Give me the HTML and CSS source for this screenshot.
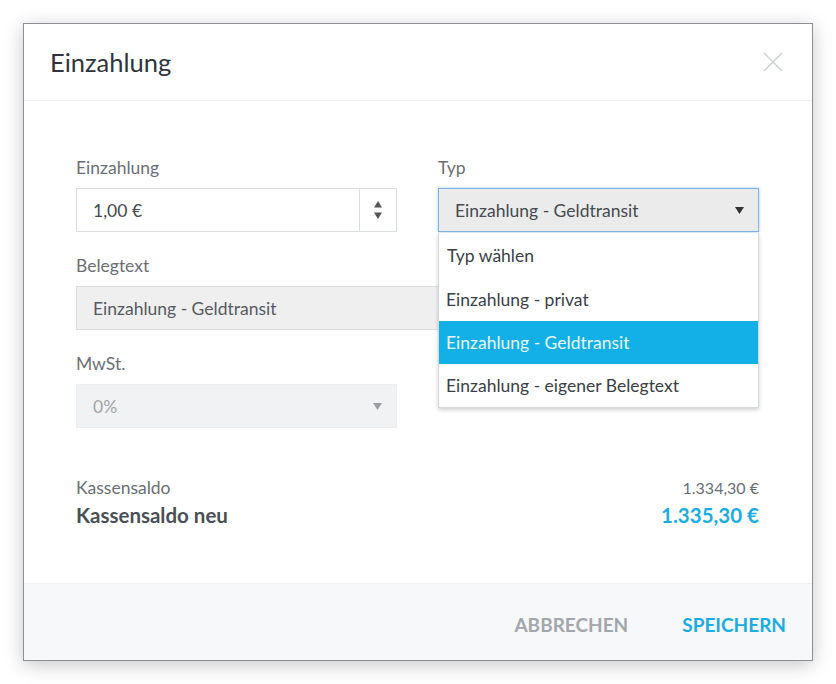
FILE: index.html
```html
<!DOCTYPE html>
<html lang="de">
<head>
<meta charset="utf-8">
<link rel="stylesheet" href="styles.css">
</head>
<body>
<div class="dialog">
  <div class="header">
    <h1 class="title">Einzahlung</h1>
    <svg class="close" width="22" height="22" viewBox="0 0 22 22"><path d="M2 2 L20 20 M20 2 L2 20" stroke="#cfd2d5" stroke-width="1.6" fill="none"/></svg>
  </div>
  <div class="body">
    <div class="form">
      <div class="field">
        <label class="label">Einzahlung</label>
        <div class="input number">
          <span class="value">1,00 €</span>
          <span class="spin">
            <svg width="10" height="24" viewBox="0 0 10 24"><path d="M5 3 L9 9.5 L1 9.5 Z" fill="#555"/><path d="M1 14.5 L9 14.5 L5 21 Z" fill="#555"/></svg>
          </span>
        </div>
      </div>
      <div class="field typ">
        <label class="label">Typ</label>
        <div class="input select focus">
          <span class="value">Einzahlung - Geldtransit</span>
          <svg class="caret" width="9" height="7" viewBox="0 0 9 7"><path d="M0 0 L9 0 L4.5 7 Z" fill="#333"/></svg>
        </div>
        <ul class="menu">
          <li class="opt">Typ wählen</li>
          <li class="opt">Einzahlung - privat</li>
          <li class="opt active">Einzahlung - Geldtransit</li>
          <li class="opt">Einzahlung - eigener Belegtext</li>
        </ul>
      </div>
      <div class="field wide">
        <label class="label">Belegtext</label>
        <div class="input readonly">
          <span class="value">Einzahlung - Geldtransit</span>
        </div>
      </div>
      <div class="field">
        <label class="label">MwSt.</label>
        <div class="input disabled">
          <span class="value">0%</span>
          <svg class="caret" width="9" height="7" viewBox="0 0 9 7"><path d="M0 0 L9 0 L4.5 7 Z" fill="#9a9ea2"/></svg>
        </div>
      </div>
    </div>
    <div class="totals">
      <div class="row small"><span>Kassensaldo</span><span class="num">1.334,30 €</span></div>
      <div class="row big"><span>Kassensaldo neu</span><span class="blue">1.335,30 €</span></div>
    </div>
  </div>
  <div class="footer">
    <button class="btn cancel">ABBRECHEN</button>
    <button class="btn save">SPEICHERN</button>
  </div>
</div>
</body>
</html>
```
FILE: styles.css
```css
* { box-sizing: border-box; }
html, body { margin: 0; background: #fff; }
body {
  padding: 23px;
  font-family: Lato, "Noto Sans", sans-serif;
  color: #555a60;
}
.dialog {
  width: 790px;
  height: 638px;
  border: 1px solid #8c8f93;
  background: #fff;
  box-shadow: 0 4px 18px rgba(0,0,0,0.22);
  display: flex;
  flex-direction: column;
}
.header {
  height: 77px;
  border-bottom: 1px solid #f0f1f2;
  display: flex;
  align-items: center;
  justify-content: space-between;
  padding: 0 28px 0 26px;
}
.title {
  margin: 0;
  font-size: 25.5px;
  font-weight: 400;
  color: #30353b;
  padding-top: 0;
}
.body {
  flex: 1;
  padding: 56px 53px 0 52px;
}
.form {
  display: grid;
  grid-template-columns: 321px 321px;
  column-gap: 41px;
  row-gap: 23px;
}
.field { display: flex; flex-direction: column; gap: 9px; }
.field.wide { grid-column: 1 / 3; }
.field.typ { position: relative; }
.label { font-size: 17.5px; line-height: 22px; color: #6a6f75; }
.input {
  height: 44px;
  border: 1px solid #dcdfe2;
  display: flex;
  align-items: center;
  padding-left: 16px;
  font-size: 17.5px;
  color: #454a50;
}
.number .value { flex: 1; }
.spin {
  width: 37px;
  height: 100%;
  border-left: 1px solid #dcdfe2;
  display: flex;
  align-items: center;
  justify-content: center;
}
.select {
  background: #ebebeb;
  justify-content: space-between;
  padding-right: 14px;
}
.select.focus {
  border-color: #7fb3e6;
  box-shadow: 0 0 3px rgba(80,160,230,0.5);
}
.readonly { background: #efefef; color: #555a60; }
.disabled {
  background: #f1f2f3;
  border-color: #eceef0;
  color: #a0a4a8;
  justify-content: space-between;
  padding-right: 14px;
}
.menu {
  position: absolute;
  left: 0;
  right: 0;
  top: 76px;
  margin: 0;
  padding: 0;
  list-style: none;
  background: #fff;
  border: 1px solid #d5d8db;
  border-top: none;
  box-shadow: 0 2px 4px rgba(0,0,0,0.18);
  z-index: 5;
}
.opt {
  height: 43px;
  display: flex;
  align-items: center;
  padding-left: 7px;
  font-size: 17.5px;
  color: #3a3f45;
}
.opt:first-child { height: 45px; padding-left: 8px; }
.opt.active { background: #12b0e6; color: #eaf7fd; }
.totals { margin-top: 50px; display: flex; flex-direction: column; gap: 5px; }
.row { display: flex; justify-content: space-between; align-items: baseline; }
.row.small { font-size: 17.5px; color: #6a6f75; line-height: 20px; }
.row.small .num { font-size: 16px; }
.row.big { font-size: 20.5px; font-weight: 700; color: #4a4f55; line-height: 24px; }
.blue { color: #19ade3; }
.footer {
  height: 77px;
  background: #f7f8fa;
  border-top: 1px solid #eef0f2;
  display: flex;
  justify-content: flex-end;
  align-items: center;
  gap: 54px;
  padding: 4px 26px 0 0;
}
.btn {
  border: none;
  background: none;
  padding: 0;
  font-family: inherit;
  font-size: 19px;
  font-weight: 700;
  letter-spacing: 0;
}
.cancel { color: #a3a7ab; }
.save { color: #19ade3; }
```
